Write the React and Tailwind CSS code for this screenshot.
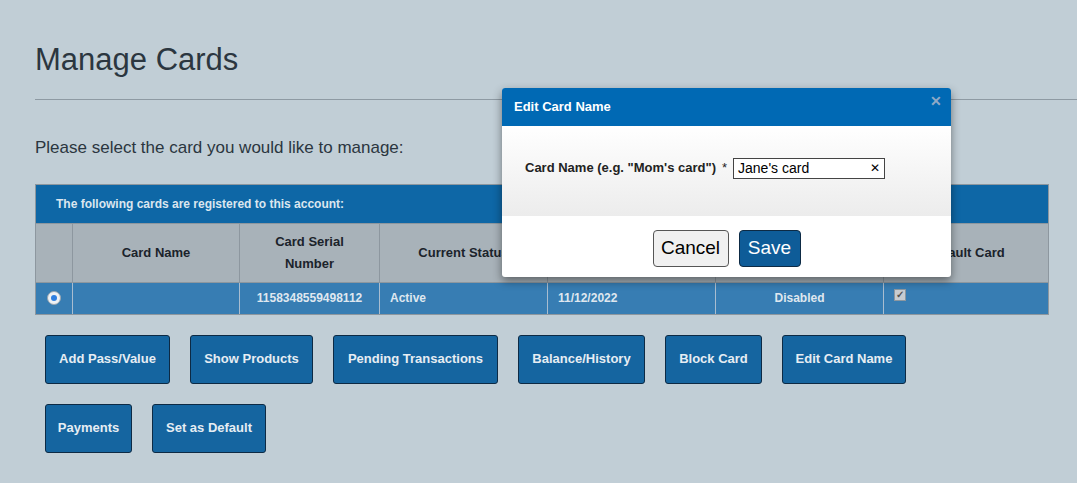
export default function App() {
  const btn = "h-[49px] px-0 whitespace-nowrap rounded-[3px] border border-[#0d2a44] bg-[#1565a0] text-[#e6edf3] text-[13px] font-bold";
  const th = "border-l border-[#8d979f] text-[#1b232b] font-bold text-[13px] text-center";
  const td = "border-l border-[#a9bdd0] text-[#dfe7ef] font-bold text-[12px]";
  return (
    <div className="relative w-[1077px] h-[483px] bg-[#c1ced6] overflow-hidden" style={{ fontFamily: "'Liberation Sans', Arial, sans-serif" }}>
      <div className="pl-[35px] pt-[42px]">
        <h1 className="text-[31px] text-[#2b3640] leading-[36px]">Manage Cards</h1>
        <div className="mt-[21px] h-px bg-[#8e9aa3]"></div>
        <p className="mt-[35px] text-[17px] text-[#2b3640]">Please select the card you would like to manage:</p>
        <div className="mt-[23px] w-[1014px] border border-[#8d979f]">
          <div className="h-[38px] bg-[#0e67a6] text-[#dbe6ef] text-[12px] font-bold flex items-center pl-[20px]">The following cards are registered to this account:</div>
          <div className="grid grid-cols-[36px_167px_140px_168px_168px_168px_1fr] h-[59px] bg-[#a8b2b9] border-t border-[#8d979f]">
            <div></div>
            <div className={th + " flex items-center justify-center"}>Card Name</div>
            <div className={th + " flex items-center justify-center leading-[22px]"}>Card Serial<br/>Number</div>
            <div className={th + " flex items-center justify-center"}>Current Status</div>
            <div className={th + " flex items-center justify-center"}>Expiration Date</div>
            <div className={th + " flex items-center justify-center"}>Autoload</div>
            <div className={th + " flex items-center justify-center"}>Default Card</div>
          </div>
          <div className="grid grid-cols-[36px_167px_140px_168px_168px_168px_1fr] h-[32px] bg-[#377db3] border-t border-[#8d979f]">
            <div className="flex items-center justify-center">
              <div className="w-[14px] h-[14px] rounded-full bg-[#eef1f4] border border-[#9aa6b0] flex items-center justify-center"><div className="w-[6px] h-[6px] rounded-full bg-[#2f7fe0]"></div></div>
            </div>
            <div className={td}></div>
            <div className={td + " flex items-center justify-center"}>1158348559498112</div>
            <div className={td + " flex items-center pl-[10px]"}>Active</div>
            <div className={td + " flex items-center pl-[10px]"}>11/12/2022</div>
            <div className={td + " flex items-center justify-center"}>Disabled</div>
            <div className={td + " flex items-start pl-[10px] pt-[6px]"}>
              <div className="w-[12px] h-[12px] bg-[#c7ccd1] border border-[#8d979f] text-[10px] leading-[10px] text-[#555] text-center">✓</div>
            </div>
          </div>
        </div>
        <div className="mt-[20px] pl-[10px] flex flex-wrap gap-x-[20px] gap-y-[20px] w-[900px]">
          <button className={btn + " w-[125px]"}>Add Pass/Value</button>
          <button className={btn + " w-[123px]"}>Show Products</button>
          <button className={btn + " w-[165px]"}>Pending Transactions</button>
          <button className={btn + " w-[127px]"}>Balance/History</button>
          <button className={btn + " w-[97px]"}>Block Card</button>
          <button className={btn + " w-[124px]"}>Edit Card Name</button>
          <button className={btn + " w-[87px]"}>Payments</button>
          <button className={btn + " w-[114px]"}>Set as Default</button>
        </div>
      </div>
      <div className="absolute left-[502px] top-[88px] w-[449px] rounded-[3px] overflow-hidden bg-white shadow-[0_4px_10px_rgba(0,0,0,0.45)]">
        <div className="h-[38px] bg-[#0069b4] flex items-center justify-between pl-[12px] pr-[9px]">
          <span className="text-white text-[13px] font-bold">Edit Card Name</span>
          <span className="text-[#8fa9c6] text-[14px] font-bold -mt-[12px]">✕</span>
        </div>
        <div className="h-[90px] bg-gradient-to-b from-white to-[#ececec] flex items-center pl-[23px] pb-[6px]">
          <span className="text-[13px] font-bold text-[#222]">Card Name (e.g. "Mom's card")</span>
          <span className="text-[13px] text-[#222] ml-[6px]">*</span>
          <div className="ml-[6px] w-[152px] h-[21px] border border-[#444] bg-white flex items-center justify-between px-[4px]">
            <span className="text-[14px] text-black">Jane's card</span>
            <span className="text-[12px] text-black">✕</span>
          </div>
        </div>
        <div className="h-[61px] flex items-center justify-center gap-[10px] pt-[4px]">
          <button className="w-[76px] h-[37px] rounded-[4px] border border-[#555] bg-[#f0f0f0] text-[19px] text-black">Cancel</button>
          <button className="w-[62px] h-[37px] rounded-[4px] border border-[#0d2a44] bg-[#0e5c98] text-[19px] text-white">Save</button>
        </div>
      </div>
    </div>
  );
}
